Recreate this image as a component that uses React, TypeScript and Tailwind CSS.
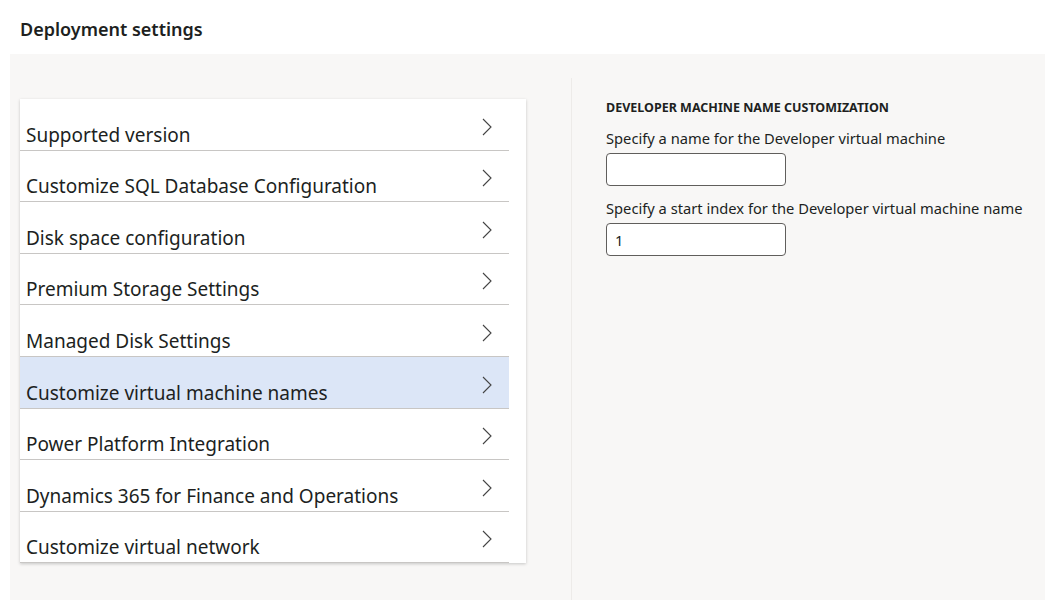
const items = [
  'Supported version',
  'Customize SQL Database Configuration',
  'Disk space configuration',
  'Premium Storage Settings',
  'Managed Disk Settings',
  'Customize virtual machine names',
  'Power Platform Integration',
  'Dynamics 365 for Finance and Operations',
  'Customize virtual network',
];

function Chevron() {
  return (
    <svg width="12" height="18" viewBox="0 0 12 18" fill="none" stroke="#444" strokeWidth="1.1">
      <path d="M2 1l8 8-8 8" />
    </svg>
  );
}

export default function App() {
  return (
    <div className="h-[600px] w-[1045px] overflow-hidden bg-white text-[#201f1e]" style={{ fontFamily: '"Noto Sans", "Open Sans", sans-serif' }}>
      <div className="flex h-[54px] items-center px-5 pt-[4px] text-[18px] font-semibold">Deployment settings</div>
      <div className="ml-[10px] flex h-[546px] bg-[#f8f7f6]">
        <div className="w-[561px] shrink-0 pl-[10px] pt-[45px]">
          <div className="w-[506px] bg-white shadow-[0_1px_3px_rgba(0,0,0,0.2)]">
            {items.map((label, i) => (
              <div
                key={label}
                className={`flex h-[51.6px] w-[489px] items-end justify-between border-b border-[#c8c6c4] pl-[6px] pr-4 ${i === 5 ? 'bg-[#dce6f7]' : ''}`}
              >
                <span className="pb-[3px] text-[19px] leading-6">{label}</span>
                <span className="mb-[14px]"><Chevron /></span>
              </div>
            ))}
          </div>
        </div>
        <div className="mt-[24px] flex-1 border-l border-[#edebe9] pl-[34px] pt-[22px] text-[14.7px]">
          <div className="text-[12.5px] font-bold leading-4">DEVELOPER MACHINE NAME CUSTOMIZATION</div>
          <div className="mt-[12px] leading-5">Specify a name for the Developer virtual machine</div>
          <input className="mt-[5px] h-[33px] w-[180px] rounded-sm border border-[#605e5c] bg-white px-2" />
          <div className="mt-[12px] leading-5">Specify a start index for the Developer virtual machine name</div>
          <input defaultValue="1" className="mt-[5px] h-[33px] w-[180px] rounded-sm border border-[#605e5c] bg-white px-2" />
        </div>
      </div>
    </div>
  );
}
